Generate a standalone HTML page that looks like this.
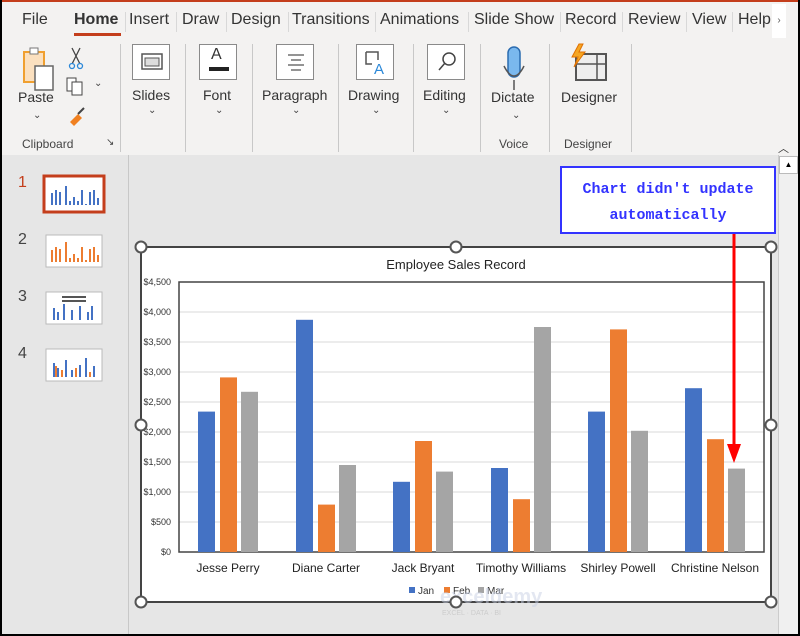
<!DOCTYPE html>
<html><head><meta charset="utf-8"><style>
*{margin:0;padding:0;box-sizing:border-box}
body{width:800px;height:636px;overflow:hidden;background:#000;font-family:"Liberation Sans",sans-serif}
#w{position:absolute;left:2px;top:0;width:796px;height:634px;background:#f3f2f1;overflow:hidden}
.t{position:absolute;top:11px;font-size:16px;color:#333}
.sep{position:absolute;top:12px;width:1px;height:20px;background:#d8d8d8}
.lbl{position:absolute;font-size:14px;color:#333;text-align:center}
.sm{position:absolute;font-size:12px;color:#444}
.vs{position:absolute;top:44px;width:1px;height:108px;background:#c8c8c8}
.box{position:absolute;top:44px;width:38px;height:36px;background:#fff;border:1px solid #8a8a8a}
.chev{position:absolute;font-size:10px;color:#444}
</style></head><body><div id="w">
<div style="position:absolute;left:0;top:0;width:796px;height:2px;background:#c43e1c"></div>
<div class="t" style="left:20px">File</div>
<div class="t" style="left:72px;font-weight:bold;color:#333">Home</div>
<div style="position:absolute;left:72px;top:33px;width:47px;height:3px;background:#c43e1c"></div>
<div class="sep" style="left:123px"></div><div class="t" style="left:127px">Insert</div>
<div class="sep" style="left:174px"></div><div class="t" style="left:180px">Draw</div>
<div class="sep" style="left:224px"></div><div class="t" style="left:229px">Design</div>
<div class="sep" style="left:286px"></div><div class="t" style="left:290px">Transitions</div>
<div class="sep" style="left:373px"></div><div class="t" style="left:378px">Animations</div>
<div class="sep" style="left:466px"></div><div class="t" style="left:472px">Slide Show</div>
<div class="sep" style="left:558px"></div><div class="t" style="left:563px">Record</div>
<div class="sep" style="left:620px"></div><div class="t" style="left:626px">Review</div>
<div class="sep" style="left:684px"></div><div class="t" style="left:690px">View</div>
<div class="sep" style="left:730px"></div><div class="t" style="left:736px">Help</div>
<div style="position:absolute;left:770px;top:4px;width:14px;height:34px;background:#fff;font-size:10px;color:#555;text-align:center;line-height:34px">›</div>

<svg style="position:absolute;left:0;top:40px" width="796" height="115">
<rect x="22" y="12" width="20" height="30" fill="#fbe0bf" stroke="#f0a030" stroke-width="2"/>
<rect x="28" y="8" width="8" height="6" fill="#fff" stroke="#777"/>
<rect x="33" y="26" width="18" height="24" fill="#fff" stroke="#666" stroke-width="1.5"/>
<path d="M70 8 L78 24 M78 8 L70 24" stroke="#444" stroke-width="1.3" fill="none"/>
<circle cx="70" cy="26" r="2.5" fill="none" stroke="#2b88d8" stroke-width="1.3"/><circle cx="78" cy="26" r="2.5" fill="none" stroke="#2b88d8" stroke-width="1.3"/>
<rect x="65" y="38" width="9" height="13" fill="#fff" stroke="#444"/><rect x="70" y="42" width="10" height="13" fill="#fff" stroke="#444"/>
<path d="M68 82 L76 74 L80 78 L72 86 Z" fill="#f08020"/><path d="M76 74 L82 68" stroke="#444" stroke-width="2"/>
<rect x="506" y="7" width="12" height="30" rx="6" fill="#7ab8ee" stroke="#2b6cb0" stroke-width="1.5"/>
<path d="M502 26 Q512 46 522 26 M512 40 V50" stroke="#555" stroke-width="1.5" fill="none"/>
<rect x="574" y="14" width="30" height="26" fill="#eee" stroke="#555" stroke-width="2"/>
<path d="M595 14 V40 M574 24 H604" stroke="#555" stroke-width="1.5"/>
<path d="M577 4 L570 17 L576 17 L572 27 L583 12 L577 12 L581 4Z" fill="#f5a623" stroke="#e07000"/>
</svg>
<div class="lbl" style="left:16px;top:89px">Paste</div><div class="chev" style="left:31px;top:110px">⌄</div><div class="chev" style="left:92px;top:78px">⌄</div>
<div class="sm" style="left:20px;top:137px">Clipboard</div><div class="sm" style="left:104px;top:137px;font-size:10px">↘</div>
<div class="vs" style="left:118px"></div>
<div class="box" style="left:130px"></div>
<svg style="position:absolute;left:139px;top:53px" width="22" height="18"><rect x="1" y="1" width="20" height="15" fill="#fff" stroke="#555" stroke-width="1.5"/><rect x="4" y="5" width="14" height="8" fill="#ddd" stroke="#555"/></svg>
<div class="lbl" style="left:130px;top:87px">Slides</div><div class="chev" style="left:146px;top:105px">⌄</div>
<div class="vs" style="left:183px"></div>
<div class="box" style="left:197px"></div>
<div style="position:absolute;left:209px;top:46px;font-size:16px;color:#333">A</div><div style="position:absolute;left:207px;top:67px;width:20px;height:4px;background:#222"></div>
<div class="lbl" style="left:201px;top:87px">Font</div><div class="chev" style="left:213px;top:105px">⌄</div>
<div class="vs" style="left:250px"></div>
<div class="box" style="left:274px"></div>
<svg style="position:absolute;left:284px;top:53px" width="20" height="18"><path d="M2 2H18M5 7H15M2 12H18M5 17H15" stroke="#555" stroke-width="1.3"/></svg>
<div class="lbl" style="left:260px;top:87px">Paragraph</div><div class="chev" style="left:290px;top:105px">⌄</div>
<div class="vs" style="left:336px"></div>
<div class="box" style="left:354px"></div>
<svg style="position:absolute;left:362px;top:50px" width="24" height="26"><path d="M2 2H14V10M2 2V14H8" stroke="#555" stroke-width="1.5" fill="none"/><text x="10" y="24" font-size="15" fill="#2b88d8" font-family="Liberation Sans">A</text></svg>
<div class="lbl" style="left:346px;top:87px">Drawing</div><div class="chev" style="left:370px;top:105px">⌄</div>
<div class="vs" style="left:411px"></div>
<div class="box" style="left:425px"></div>
<svg style="position:absolute;left:434px;top:50px" width="22" height="24"><circle cx="13" cy="9" r="6" fill="none" stroke="#444" stroke-width="1.5"/><path d="M9 13L3 20" stroke="#444" stroke-width="1.5"/></svg>
<div class="lbl" style="left:421px;top:87px">Editing</div><div class="chev" style="left:440px;top:105px">⌄</div>
<div class="vs" style="left:478px"></div>
<div class="lbl" style="left:489px;top:89px">Dictate</div><div class="chev" style="left:510px;top:110px">⌄</div>
<div class="sm" style="left:497px;top:137px">Voice</div>
<div class="vs" style="left:547px"></div>
<div class="lbl" style="left:559px;top:89px">Designer</div>
<div class="sm" style="left:562px;top:137px">Designer</div>
<div class="vs" style="left:629px"></div>
<div style="position:absolute;left:776px;top:140px;font-size:11px;color:#333">︿</div>

<div style="position:absolute;left:0;top:155px;width:796px;height:479px;background:#e6e6e6"></div>
<div style="position:absolute;left:126px;top:155px;width:1px;height:479px;background:#c8c8c8"></div>
<div style="position:absolute;left:776px;top:155px;width:20px;height:479px;background:#f0f0f0;border-left:1px solid #ccc"></div>
<div style="position:absolute;left:777px;top:156px;width:19px;height:18px;background:#fff;border:1px solid #bbb;font-size:8px;text-align:center;line-height:16px">▲</div>

<div style="position:absolute;left:16px;top:174px;font-size:16px;color:#c43e1c">1</div>
<div style="position:absolute;left:16px;top:231px;font-size:16px;color:#444">2</div>
<div style="position:absolute;left:16px;top:288px;font-size:16px;color:#444">3</div>
<div style="position:absolute;left:16px;top:345px;font-size:16px;color:#444">4</div>
<svg style="position:absolute;left:0;top:0" width="130" height="400">
<rect x="42" y="176" width="60" height="36" fill="#fff" stroke="#c43e1c" stroke-width="3"/>
<rect x="44" y="235" width="56" height="32" fill="#fff" stroke="#bbb"/>
<rect x="44" y="292" width="56" height="32" fill="#fff" stroke="#bbb"/>
<rect x="44" y="349" width="56" height="32" fill="#fff" stroke="#bbb"/>
<g stroke-width="2">
<path d="M50 205V193M54 205V190M58 205V192M64 205V186M68 205V201M72 205V197M76 205V201M80 205V190M84 205V204M88 205V192M92 205V190M96 205V198" stroke="#4472c4"/>
<path d="M50 262V250M54 262V247M58 262V249M64 262V242M68 262V258M72 262V254M76 262V258M80 262V247M84 262V260M88 262V249M92 262V247M96 262V255" stroke="#ed7d31"/>
<path d="M52 320V308M56 320V312M62 320V304M70 320V310M78 320V306M86 320V312M90 320V306" stroke="#4472c4"/>
<path d="M60 297H84M60 301H84" stroke="#555"/>
<path d="M52 377V363M56 377V368M64 377V360M70 377V370M78 377V365M84 377V358M92 377V366" stroke="#4472c4"/>
<path d="M54 377V366M60 377V370M74 377V368M88 377V372" stroke="#ed7d31"/>
</g></svg>

<svg style="position:absolute;left:-2px;top:0" width="800" height="636">
<rect x="141" y="247" width="630" height="355" fill="#fff" stroke="#444" stroke-width="2"/>
<text x="456" y="269" font-size="13" text-anchor="middle" fill="#222" font-family="Liberation Sans">Employee Sales Record</text>
<g stroke="#d9d9d9" stroke-width="1">
<path d="M179 312H764M179 342H764M179 372H764M179 402H764M179 432H764M179 462H764M179 492H764M179 522H764"/></g>
<rect x="179" y="282" width="585" height="270" fill="none" stroke="#444" stroke-width="1.5"/>
<g font-size="9" fill="#333" text-anchor="end" font-family="Liberation Sans">
<text x="171" y="285">$4,500</text><text x="171" y="315">$4,000</text><text x="171" y="345">$3,500</text><text x="171" y="375">$3,000</text><text x="171" y="405">$2,500</text><text x="171" y="435">$2,000</text><text x="171" y="465">$1,500</text><text x="171" y="495">$1,000</text><text x="171" y="525">$500</text><text x="171" y="555">$0</text></g>
<g fill="#4472c4">
<rect x="198" y="411.6" width="17" height="140.4"/><rect x="296" y="319.8" width="17" height="232.2"/><rect x="393" y="481.8" width="17" height="70.2"/><rect x="491" y="468" width="17" height="84"/><rect x="588" y="411.6" width="17" height="140.4"/><rect x="685" y="388.2" width="17" height="163.8"/></g>
<g fill="#ed7d31">
<rect x="220" y="377.4" width="17" height="174.6"/><rect x="318" y="504.6" width="17" height="47.4"/><rect x="415" y="441" width="17" height="111"/><rect x="513" y="499.2" width="17" height="52.8"/><rect x="610" y="329.4" width="17" height="222.6"/><rect x="707" y="439.2" width="17" height="112.8"/></g>
<g fill="#a5a5a5">
<rect x="241" y="391.8" width="17" height="160.2"/><rect x="339" y="465" width="17" height="87"/><rect x="436" y="471.6" width="17" height="80.4"/><rect x="534" y="327" width="17" height="225"/><rect x="631" y="430.8" width="17" height="121.2"/><rect x="728" y="468.6" width="17" height="83.4"/></g>
<g font-size="12" fill="#222" text-anchor="middle" font-family="Liberation Sans">
<text x="228" y="572">Jesse Perry</text><text x="326" y="572">Diane Carter</text><text x="423" y="572">Jack Bryant</text><text x="521" y="572">Timothy Williams</text><text x="618" y="572">Shirley Powell</text><text x="715" y="572">Christine Nelson</text></g>
<g font-size="10" fill="#333" font-family="Liberation Sans">
<rect x="409" y="587" width="6" height="6" fill="#4472c4"/><text x="418" y="594">Jan</text>
<rect x="444" y="587" width="6" height="6" fill="#ed7d31"/><text x="453" y="594">Feb</text>
<rect x="478" y="587" width="6" height="6" fill="#a5a5a5"/><text x="487" y="594">Mar</text></g>
<text x="440" y="603" font-size="20" fill="#c8d0e4" opacity="0.5" font-family="Liberation Sans" font-weight="bold">exceldemy</text>
<text x="442" y="615" font-size="7" fill="#ccc" font-family="Liberation Sans">EXCEL · DATA · BI</text>
<g fill="#fff" stroke="#555" stroke-width="2">
<circle cx="141" cy="247" r="5.5"/><circle cx="456" cy="247" r="5.5"/><circle cx="771" cy="247" r="5.5"/>
<circle cx="141" cy="425" r="5.5"/><circle cx="771" cy="425" r="5.5"/>
<circle cx="141" cy="602" r="5.5"/><circle cx="456" cy="602" r="5.5"/><circle cx="771" cy="602" r="5.5"/></g>
<path d="M734 234V450" stroke="#ff0000" stroke-width="3"/>
<path d="M727 444H741L734 463Z" fill="#ff0000"/>
<rect x="561" y="167" width="214" height="66" fill="#fff" stroke="#3333ff" stroke-width="2"/>
<g font-size="15" fill="#3333ff" font-weight="bold" text-anchor="middle" font-family="'Comic Sans MS','Liberation Mono',monospace">
<text x="668" y="193">Chart didn't update</text><text x="668" y="219">automatically</text></g>
</svg>
</div></body></html>
